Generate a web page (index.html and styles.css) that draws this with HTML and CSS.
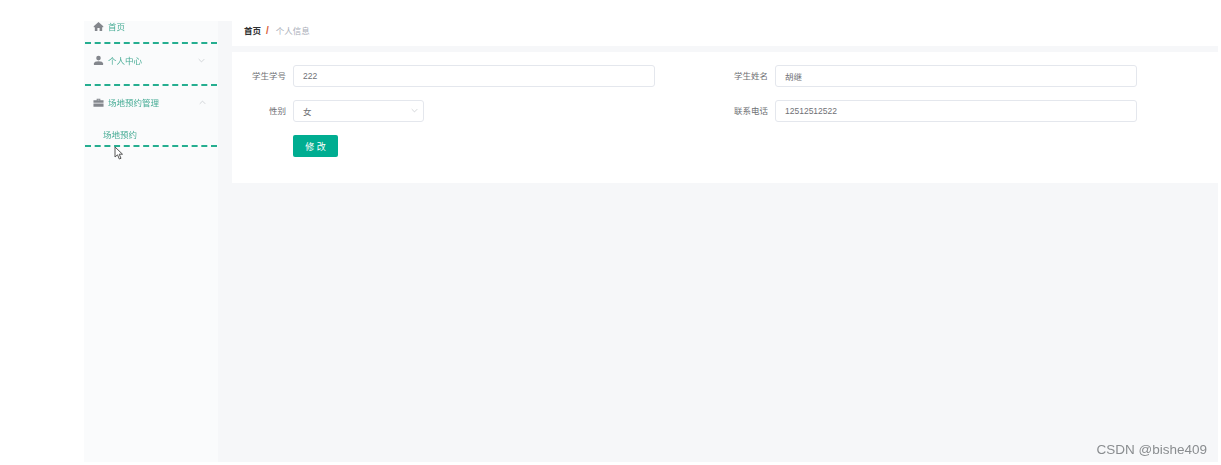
FILE: index.html
```html
<!DOCTYPE html>
<html lang="zh">
<head>
<meta charset="utf-8">
<title>个人信息</title>
<link rel="stylesheet" href="styles.css">
</head>
<body>
<div class="app">
  <aside class="sidebar">
    <div class="menu-item first">
      <svg class="icon home" viewBox="0 0 12 12"><path d="M6 1 .8 5.800v1H2V11h2.800V7.600h2.400V11H10V6.800h1.200v-1z"/></svg>
      <span>首页</span>
    </div>
    <div class="menu-item">
      <svg class="icon" viewBox="0 0 12 12"><circle cx="6" cy="3.400" r="2.500"/><path d="M1 11V9.400C1 7.600 3 6.700 6 6.700s5 .9 5 2.700V11z"/></svg>
      <span>个人中心</span>
      <svg class="chev" viewBox="0 0 10 6"><path d="M1 1l4 4 4-4"/></svg>
    </div>
    <div class="menu-group">
      <div class="menu-head">
        <svg class="icon" viewBox="0 0 12 12"><path d="M4 3.500V2h4v1.500h3.500V6.200h-11V3.500zM5 3.500h2V2.900H5zM.5 7h11v3.500H.5z"/></svg>
        <span>场地预约管理</span>
        <svg class="chev" viewBox="0 0 10 6"><path d="M1 5l4-4 4 4"/></svg>
      </div>
      <div class="sub-item">场地预约</div>
    </div>
    <svg class="cursor" viewBox="0 0 10 14"><path d="M1 1v10l2.500-2.200L5.300 13l1.700-.7-1.800-4.100H8.500z"/></svg>
  </aside>
  <main class="main">
    <nav class="crumbs">
      <b>首页</b><i>/</i><span>个人信息</span>
    </nav>
    <form class="card">
      <div class="grid">
        <div class="field"><label>学生学号</label><div class="input wide">222</div></div>
        <div class="field"><label>学生姓名</label><div class="input wide">胡继</div></div>
        <div class="field"><label>性别</label>
          <div class="input narrow"><span>女</span><svg class="chev" viewBox="0 0 10 6"><path d="M1 1l4 4 4-4"/></svg></div>
        </div>
        <div class="field"><label>联系电话</label><div class="input wide">12512512522</div></div>
      </div>
      <div class="actions"><button type="button" class="btn">修 改</button></div>
    </form>
  </main>
</div>
<div class="mark">CSDN @bishe409</div>
</body>
</html>
```
FILE: styles.css
```css
* { box-sizing: border-box; }
html, body { margin: 0; height: 100%; background: #fff; overflow: hidden; }
body {
  position: relative;
  font-family: "Liberation Sans", "Noto Sans CJK SC", sans-serif;
  font-size: 8.5px;
}
.app {
  display: flex;
  height: 462px;
  margin: 0 3px 0 84px;
  padding-top: 21px;
  filter: blur(0.5px);
}
.sidebar {
  position: relative;
  width: 134px;
  flex: none;
  background: #fafbfc;
}
.menu-item, .menu-head {
  display: flex;
  align-items: center;
  color: #45ab94;
}
.menu-item {
  height: 42px;
  margin: 0 1px;
  padding: 0 12px 8px 8px;
  border-bottom: 2px dashed #25ae90;
}
.menu-item.first { height: 23px; padding-bottom: 12px; }
.menu-head { height: 34px; padding: 0 12px 2px 9px; }
.icon { width: 11px; height: 11px; margin-right: 4px; fill: #83868c; flex: none; }
.home { margin-top: 2px; }
.chev { width: 7px; height: 5px; margin-left: auto; fill: none; stroke: #c2c5ca; stroke-width: 1; flex: none; }
.sub-item {
  height: 27px;
  margin: 0 1px;
  padding: 8px 0 0 18px;
  border-bottom: 2px dashed #25ae90;
  color: #45ab94;
}
.cursor {
  position: absolute;
  left: 30px;
  top: 125px;
  width: 10px;
  height: 14px;
  fill: #fff;
  stroke: #555;
  stroke-width: 1;
}
.main {
  flex: 1;
  background: #f6f7f9;
  padding-left: 14px;
}
.crumbs {
  height: 25px;
  background: #fff;
  display: flex;
  align-items: center;
  padding: 0 0 7px 12px;
  color: #a9aeb8;
}
.crumbs b { color: #303133; font-weight: 700; }
.crumbs i { color: #d9603b; font-style: normal; font-weight: 700; font-size: 10px; margin: 0 7px 0 5px; }
.card {
  margin-top: 6px;
  height: 131px;
  background: #fff;
  padding: 13px 0 0;
}
.grid {
  display: grid;
  grid-template-columns: 481px 1fr;
  row-gap: 13px;
}
.field { display: flex; align-items: center; }
label {
  width: 54px;
  padding-bottom: 2px;
  text-align: right;
  color: #6f7175;
  margin-right: 7px;
  flex: none;
}
.input {
  height: 22px;
  border: 1px solid #e4e7ed;
  border-radius: 3px;
  background: #fff;
  color: #6f7175;
  display: flex;
  align-items: center;
  padding: 0 9px 1px;
}
.wide { width: 362px; }
.narrow { width: 131px; padding-right: 5px; }
.field:nth-child(even) label { width: 55px; }
.actions { margin: 13px 0 0 61px; }
.btn {
  width: 45px;
  height: 22px;
  border: 0;
  border-radius: 2px;
  background: #00ad91;
  color: #fff;
  font-family: inherit;
  font-size: 9px;
  padding: 0;
}
.mark {
  position: absolute;
  right: 14px;
  top: 442px;
  font-size: 13.5px;
  color: #8a8d90;
}
```
